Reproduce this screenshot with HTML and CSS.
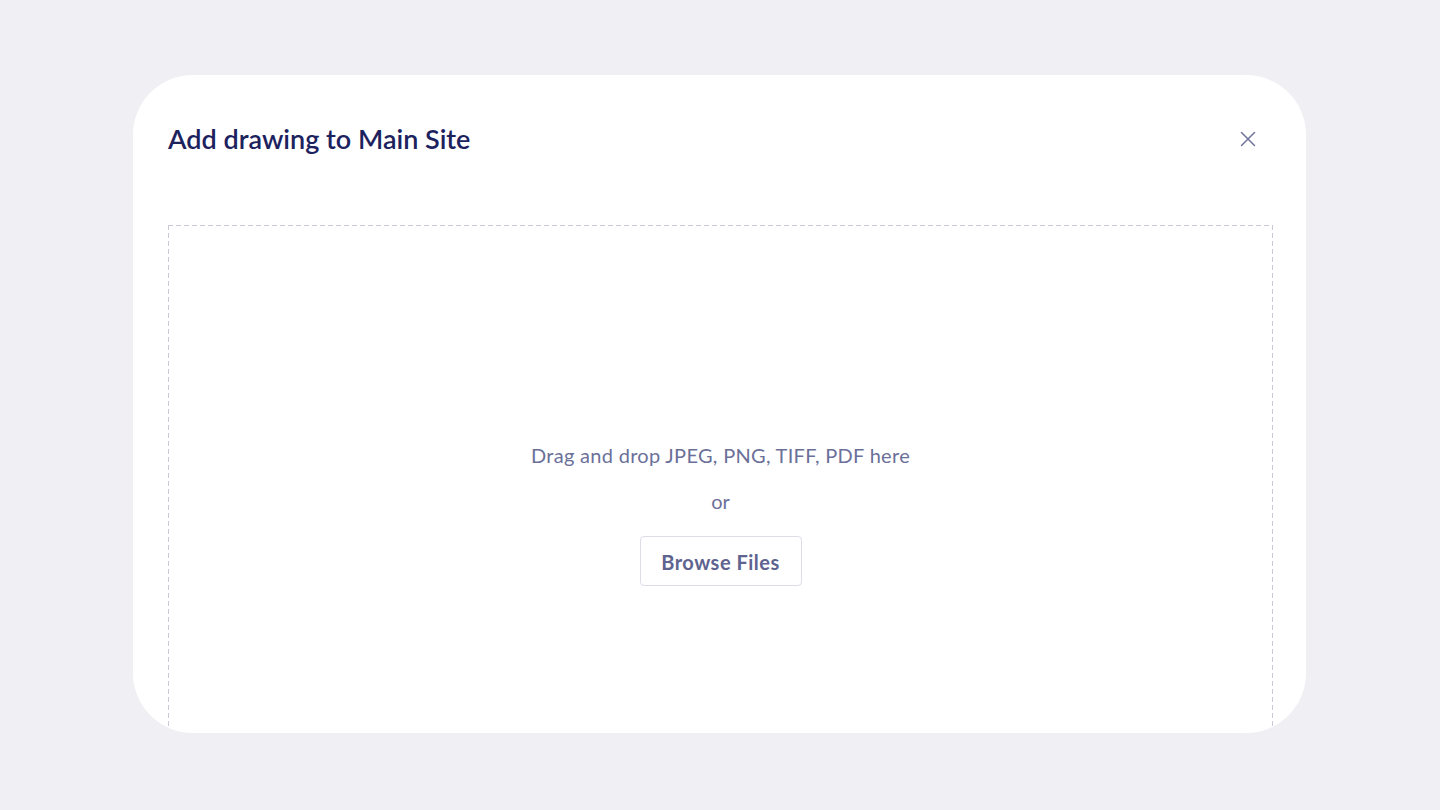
FILE: index.html
```html
<!DOCTYPE html>
<html lang="en">
<head>
<meta charset="utf-8">
<title>Add drawing</title>
<link rel="stylesheet" href="styles.css">
</head>
<body>
<div class="stage">
  <section class="modal">
    <header class="modal-header">
      <h1 class="modal-title">Add drawing to Main Site</h1>
      <button class="close-btn" aria-label="Close">
        <svg width="16" height="16" viewBox="0 0 16 16"><path d="M1.5 1.5 L14.5 14.5 M14.5 1.5 L1.5 14.5" stroke="#6f749c" stroke-width="1.5" fill="none" stroke-linecap="round"/></svg>
      </button>
    </header>
    <div class="dropzone">
      <p class="drop-text">Drag and drop JPEG, PNG, TIFF, PDF here</p>
      <p class="or-text">or</p>
      <button class="browse-btn">Browse Files</button>
    </div>
  </section>
</div>
</body>
</html>
```
FILE: styles.css
```css
* { box-sizing: border-box; }
html, body { margin: 0; padding: 0; }
body {
  width: 1440px;
  height: 810px;
  background: #f0f0f4;
  font-family: Lato, "Open Sans", sans-serif;
  overflow: hidden;
}
.stage {
  padding-top: 75px;
  display: flex;
  justify-content: center;
}
.modal {
  width: 1173px;
  height: 658px;
  margin-left: -1px;
  background: #ffffff;
  border-radius: 60px;
  overflow: hidden;
  padding: 40px 33px 0 35px;
}
.modal-header {
  display: flex;
  align-items: center;
  justify-content: space-between;
  height: 48px;
  margin-bottom: 62px;
}
.modal-title {
  margin: 0;
  font-size: 27px;
  font-weight: 600;
  color: #1c225e;
  line-height: 48px;
}
.close-btn {
  background: none;
  border: 0;
  padding: 0;
  width: 16px;
  height: 16px;
  margin-right: 17px;
  display: flex;
}
.dropzone {
  height: 560px;
  background-image:
    repeating-linear-gradient(90deg, #c9cad8 0 5px, transparent 5px 8px),
    repeating-linear-gradient(90deg, #c9cad8 0 5px, transparent 5px 8px),
    repeating-linear-gradient(180deg, #c9cad8 0 5px, transparent 5px 8px),
    repeating-linear-gradient(180deg, #c9cad8 0 5px, transparent 5px 8px);
  background-size: 100% 1px, 100% 1px, 1px 100%, 1px 100%;
  background-position: 0 0, 0 100%, 0 0, 100% 0;
  background-repeat: no-repeat;
  display: flex;
  flex-direction: column;
  align-items: center;
  padding-top: 218px;
}
.drop-text {
  margin: 0;
  font-size: 20px;
  letter-spacing: 0.3px;
  line-height: 24px;
  color: #6b7099;
}
.or-text {
  margin: 22px 0 0;
  font-size: 20px;
  line-height: 24px;
  color: #6b7099;
}
.browse-btn {
  margin-top: 23px;
  width: 162px;
  height: 50px;
  padding-top: 2px;
  background: #fff;
  border: 1px solid #dcdde6;
  border-radius: 4px;
  font-family: inherit;
  font-size: 20px;
  letter-spacing: 0.5px;
  font-weight: 700;
  color: #5e638f;
}
```
